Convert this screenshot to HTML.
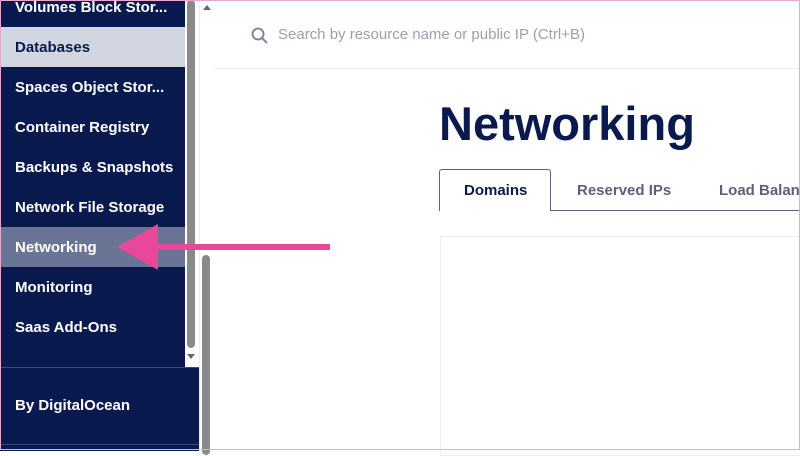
<!DOCTYPE html>
<html><head><style>
body{margin:0;width:800px;height:450px;overflow:hidden;position:relative;font-family:"Liberation Sans",sans-serif;background:#fff}
.sb{position:absolute;left:0;top:0;width:185px;height:367px;background:#0a1a4e}
.it{position:absolute;left:0;width:185px;height:40px;line-height:42px;padding-left:15px;box-sizing:border-box;color:#fff;font-size:15px;font-weight:bold}
.sc1{position:absolute;left:185px;top:0;width:14px;height:367px;background:#fff}
.bot{position:absolute;left:0;top:367px;width:199px;height:83px;background:#0a1a4e;border-top:1px solid #3a4a78}
.sc2{position:absolute;left:199px;top:0;width:15px;height:450px;background:#fff;border-left:1px solid #eee}
</style></head><body>
<div class="sb">
<div class="it" style="top:-13px">Volumes Block Stor...</div>
<div class="it" style="top:27px;background:#d0d5e0;color:#0a1a4e">Databases</div>
<div class="it" style="top:67px">Spaces Object Stor...</div>
<div class="it" style="top:107px">Container Registry</div>
<div class="it" style="top:147px">Backups &amp; Snapshots</div>
<div class="it" style="top:187px">Network File Storage</div>
<div class="it" style="top:227px;background:#6a7596">Networking</div>
<div class="it" style="top:267px">Monitoring</div>
<div class="it" style="top:307px">Saas Add-Ons</div>
</div>
<div class="sc1"><div style="position:absolute;left:2px;top:0;width:8px;height:348px;background:#8a8a8a;border-radius:4px"></div>
<div style="position:absolute;left:2px;top:354px;border-left:4px solid transparent;border-right:4px solid transparent;border-top:5px solid #666"></div></div>
<div class="bot"><div class="it" style="top:17px;width:199px">By DigitalOcean</div>
<div style="position:absolute;left:0;top:76px;width:199px;height:1px;background:#3a4a78"></div></div>
<div class="sc2"><div style="position:absolute;left:3px;top:5px;border-left:4px solid transparent;border-right:4px solid transparent;border-bottom:5px solid #666"></div>
<div style="position:absolute;left:2px;top:255px;width:8px;height:200px;background:#8a8a8a;border-radius:4px"></div></div>
<div style="position:absolute;left:215px;top:68px;width:585px;height:1px;background:#eee"></div>
<svg style="position:absolute;left:251px;top:27px" width="18" height="18" viewBox="0 0 18 18"><circle cx="7" cy="7" r="5.5" fill="none" stroke="#8088a0" stroke-width="2"/><line x1="11" y1="11" x2="16" y2="16" stroke="#8088a0" stroke-width="2"/></svg>
<div style="position:absolute;left:278px;top:26px;font-size:15px;color:#9aa0b0">Search by resource name or public IP (Ctrl+B)</div>
<div style="position:absolute;left:439px;top:96px;font-size:47px;font-weight:bold;color:#0a1a4e">Networking</div>
<div style="position:absolute;left:439px;top:210px;width:361px;height:1px;background:#5a6278"></div>
<div style="position:absolute;left:439px;top:169px;width:112px;height:42px;border:1px solid #5a6278;border-bottom:none;border-radius:3px 3px 0 0;background:#fff;box-sizing:border-box"></div>
<div style="position:absolute;left:464px;top:182px;font-size:15px;font-weight:bold;color:#0a1a4e">Domains</div>
<div style="position:absolute;left:577px;top:182px;font-size:15px;font-weight:bold;color:#5a6278">Reserved IPs</div>
<div style="position:absolute;left:719px;top:182px;font-size:15px;font-weight:bold;color:#5a6278;white-space:nowrap">Load Balancers</div>
<div style="position:absolute;left:440px;top:236px;width:370px;height:220px;border:1px solid #eee;box-sizing:border-box"></div>
<svg style="position:absolute;left:110px;top:222px" width="225" height="50"><line x1="40" y1="25" x2="220" y2="25" stroke="#e8479a" stroke-width="6"/><polygon points="7,25 48,2 48,48" fill="#e8479a"/></svg>
<div style="position:absolute;inset:0;border:1px solid #e9a9cf;pointer-events:none"></div>
</body></html>
